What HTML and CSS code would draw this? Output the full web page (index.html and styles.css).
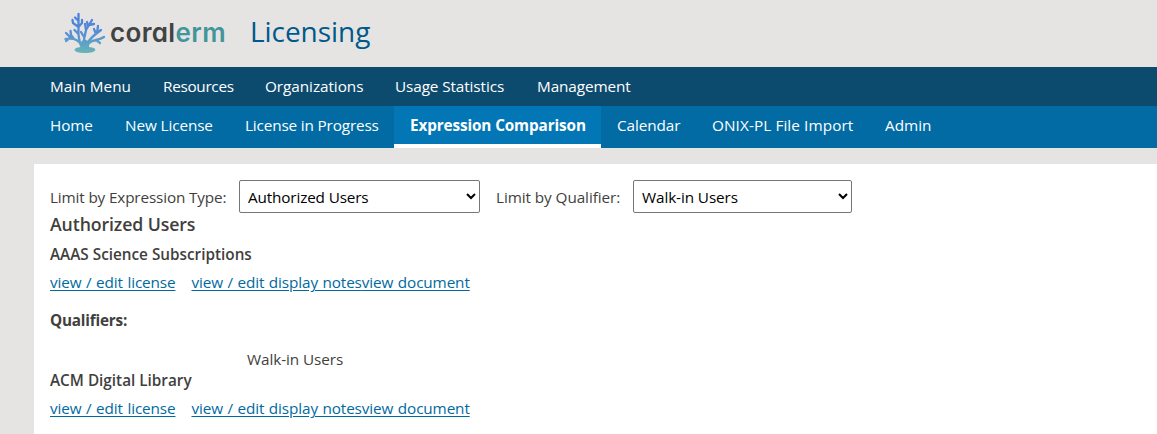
FILE: index.html
```html
<!DOCTYPE html>
<html lang="en">
<head>
<meta charset="utf-8">
<title>Licensing</title>
<link rel="stylesheet" href="styles.css">
</head>
<body>
<header class="masthead">
  <svg class="coral" width="42" height="42" viewBox="0 0 42 42" fill="none" stroke="url(#sea)" stroke-width="2.3" stroke-linecap="round" stroke-linejoin="round">
    <defs><linearGradient id="sea" gradientUnits="userSpaceOnUse" x1="0" y1="1" x2="0" y2="41"><stop offset="0" stop-color="#4b7fdc"/><stop offset=".5" stop-color="#558dd6"/><stop offset="1" stop-color="#68b5b5"/></linearGradient></defs>
    <path d="M17 34C15 28 14 23 14.500 17L14.500 2M14.500 9L11 5.500M14.500 15L9 11L8.500 8M14.500 15L18 11L18 8M14.500 22L10.500 18M17 33C15 28 9 26 1.500 27M7 26L2 21M10 27L7 23L6.500 19M5 26.500L2 29"/>
    <path d="M20 34C19 28 21 24 22 18L28 8M22 18L21 12M24 14L23 10M25 13L30 12M22 34C24 28 28 25 33 21L34 14M32 22L30 17M33 21L37 18M24 32C29 27 34 29 40 25M32 28L36 31M20 25L17 20"/>
    <path fill="url(#sea)" stroke="none" d="M12 28L17 30L20 27L24 29L29 27Q25 30 25 35C34 35.500 34 41 21 41C8 41 8 35.500 17 35Q16 30 12 28Z"/>
  </svg>
  <div class="brand">coral<span class="brand-tail">erm</span></div>
  <h1 class="module">Licensing</h1>
</header>
<nav class="bar bar-main">
  <a class="tab main-menu">Main Menu</a><a class="tab resources">Resources</a><a class="tab organizations">Organizations</a><a class="tab statistics">Usage Statistics</a><a class="tab management">Management</a>
</nav>
<nav class="bar bar-sub">
  <a class="tab home">Home</a><a class="tab new-license">New License</a><a class="tab in-progress">License in Progress</a><a class="tab current">Expression Comparison</a><a class="tab calendar">Calendar</a><a class="tab import">ONIX-PL File Import</a><a class="tab admin">Admin</a>
</nav>
<main class="panel">
  <div class="filters">
    <label class="label-type" for="type">Limit by Expression Type:</label>
    <select class="pick pick-type" id="type"><option>Authorized Users</option></select>
    <label class="label-qualifier" for="qualifier">Limit by Qualifier:</label>
    <select class="pick pick-qualifier" id="qualifier"><option>Walk-in Users</option></select>
  </div>
  <h2 class="group">Authorized Users</h2>
  <h3 class="resource">AAAS Science Subscriptions</h3>
  <p class="links"><a href="#">view / edit license</a><a href="#">view / edit display notes</a><a href="#">view document</a></p>
  <p class="qualifiers">Qualifiers:</p>
  <p class="value">Walk-in Users</p>
  <h3 class="resource">ACM Digital Library</h3>
  <p class="links"><a href="#">view / edit license</a><a href="#">view / edit display notes</a><a href="#">view document</a></p>
</main>
</body>
</html>
```
FILE: styles.css
```css
* { box-sizing: border-box; }
body { margin: 0; height: 434px; overflow: hidden; background: #e6e4e2; color: #413f3d; font: 15.3px/24px "Open Sans", "Noto Sans", sans-serif; letter-spacing: -0.15px; }
h1, h2, h3, p { margin: 0; }
.masthead { display: flex; height: 67px; padding-left: 64px; }
.coral { margin-top: 12px; flex: none; }
.brand { width: 115px; margin-left: 4px; padding-top: 13px; font: 600 26px/40px Inter, sans-serif; font-feature-settings: "cv11"; letter-spacing: 0.35px; color: #414342; white-space: nowrap; }
.brand-tail { color: #42959b; }
.module { margin-left: 25px; padding-top: 11px; font-size: 28px; line-height: 40px; font-weight: 500; color: #00598c; letter-spacing: -0.05px; }
.bar { display: flex; padding-left: 34px; color: #fff; white-space: nowrap; }
.bar-main { height: 39px; background: #0d4b6e; }
.bar-sub { height: 42px; background: #026ba3; }
.tab { flex: none; padding: 7px 0 0 16px; letter-spacing: -0.1px; }
.main-menu { width: 113px; letter-spacing: 0.05px; }
.resources { width: 102px; letter-spacing: -0.3px; }
.organizations { width: 130px; letter-spacing: -0.05px; }
.statistics { width: 142px; }
.home { width: 75px; }
.new-license { width: 120px; }
.in-progress { width: 165px; letter-spacing: -0.15px; }
.current { width: 207px; background: #0377b5; border-bottom: 4px solid #fff; font-weight: 700; letter-spacing: -0.12px; }
.calendar { width: 95px; }
.import { width: 173px; letter-spacing: 0.1px; }
.admin { width: 79px; letter-spacing: 0; }
.panel { height: 270px; margin: 16px 0 0 34px; padding: 16px 16px 0; background: #fff; }
.filters { display: flex; height: 33px; white-space: nowrap; }
.filters label { padding-top: 5px; }
.label-type { width: 189px; }
.label-qualifier { width: 137px; margin-left: 16px; letter-spacing: -0.08px; }
.pick { height: 33px; padding: 0 4px; border: 1px solid #767676; border-radius: 2px; background: #fff; color: #000; font: inherit; letter-spacing: inherit; }
.pick-type { width: 241px; }
.pick-qualifier { width: 219px; letter-spacing: -0.1px; }
.group { margin-top: -1px; font-size: 17.7px; line-height: 24px; font-weight: 600; letter-spacing: -0.1px; }
.resource { font-size: 15.3px; line-height: 24px; font-weight: 600; letter-spacing: 0; }
.group + .resource { margin-top: 6px; }
.links { display: flex; margin-top: 4px; letter-spacing: -0.12px; word-spacing: 0.7px; }
.links a { color: #00699f; text-underline-offset: 2px; }
.links a:first-child { margin-right: 16px; }
.qualifiers { margin-top: 14px; font-weight: 700; letter-spacing: -0.2px; }
.value { margin: 15px 0 0 197px; letter-spacing: -0.08px; }
.value + .resource { margin-top: -3px; }
```
